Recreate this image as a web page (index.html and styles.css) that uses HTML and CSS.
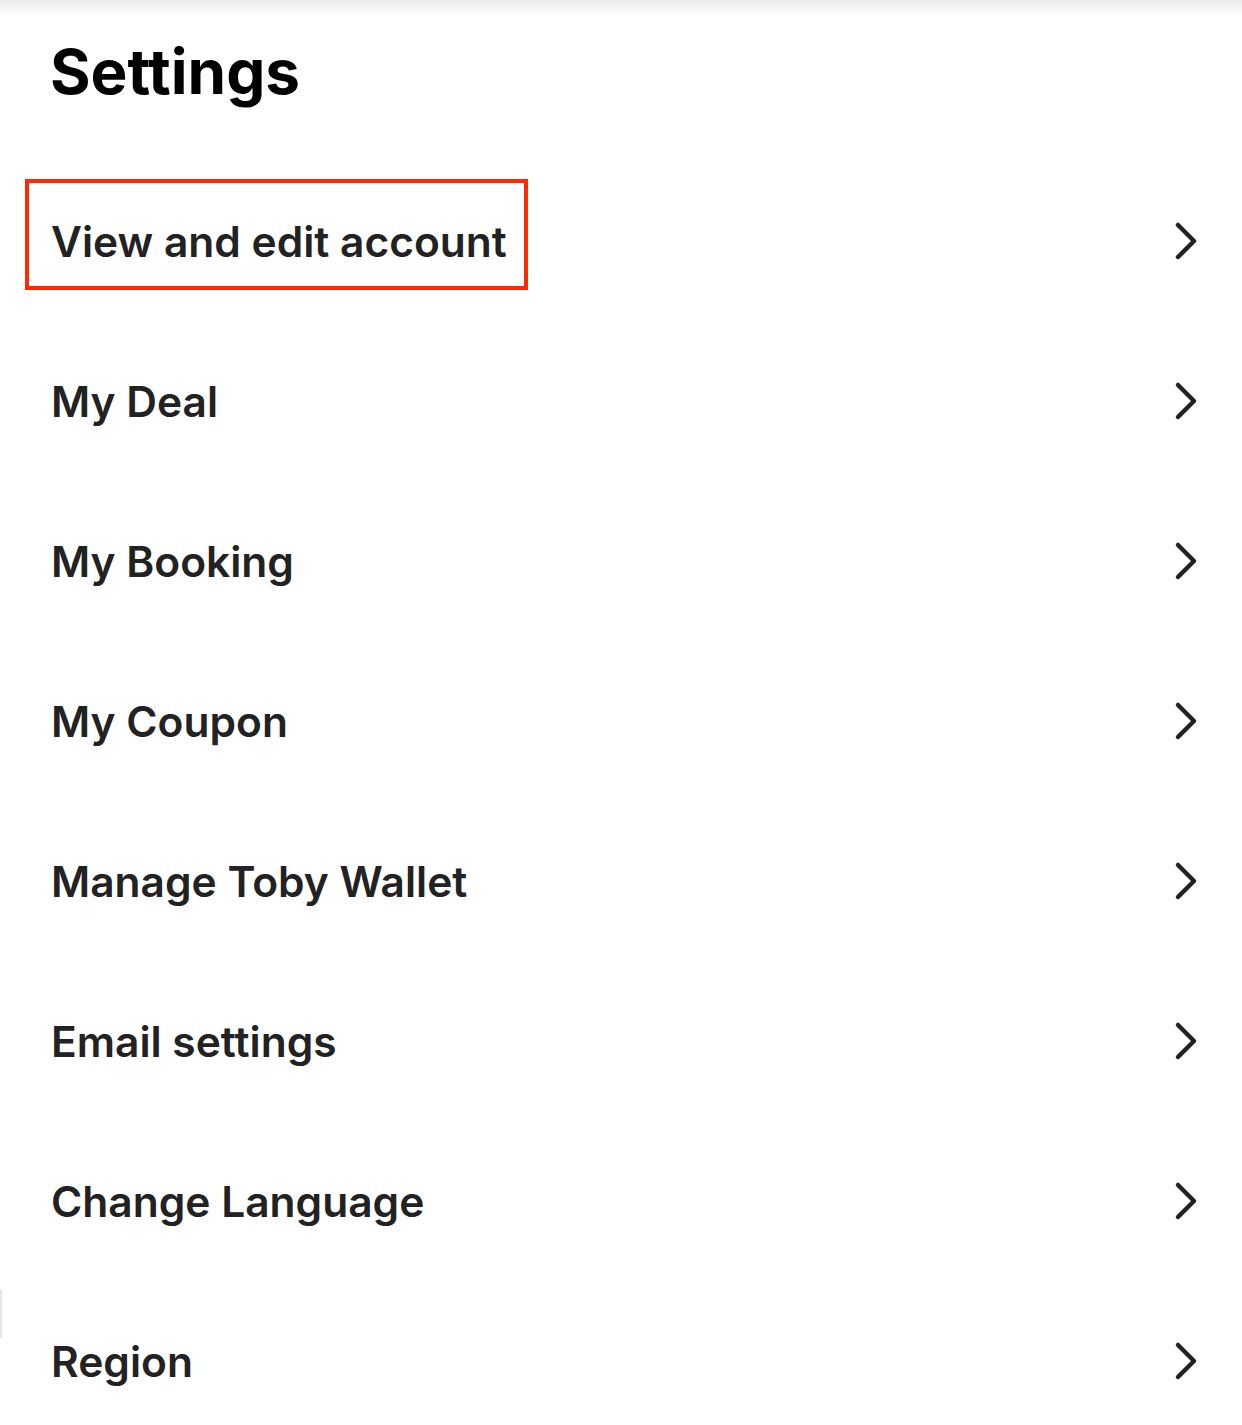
FILE: index.html
```html
<!DOCTYPE html>
<html lang="en">
<head>
    <meta charset="UTF-8">
    <meta name="viewport" content="width=device-width, initial-scale=1.0">
    <title>Settings</title>
    <link rel="stylesheet" href="styles.css">
</head>

<body>
    <div class="top-shade"></div>
    <div class="edge-mark"></div>

    <h1 class="title">Settings</h1>

    <ul class="menu">
        <li><a href="#"><span class="label highlight">View and edit account</span><svg class="chevron" viewBox="0 0 24 40"><path d="M4 4 L20 20 L4 36"/></svg></a></li>
        <li><a href="#"><span class="label">My Deal</span><svg class="chevron" viewBox="0 0 24 40"><path d="M4 4 L20 20 L4 36"/></svg></a></li>
        <li><a href="#"><span class="label">My Booking</span><svg class="chevron" viewBox="0 0 24 40"><path d="M4 4 L20 20 L4 36"/></svg></a></li>
        <li><a href="#"><span class="label">My Coupon</span><svg class="chevron" viewBox="0 0 24 40"><path d="M4 4 L20 20 L4 36"/></svg></a></li>
        <li><a href="#"><span class="label">Manage Toby Wallet</span><svg class="chevron" viewBox="0 0 24 40"><path d="M4 4 L20 20 L4 36"/></svg></a></li>
        <li><a href="#"><span class="label">Email settings</span><svg class="chevron" viewBox="0 0 24 40"><path d="M4 4 L20 20 L4 36"/></svg></a></li>
        <li><a href="#"><span class="label">Change Language</span><svg class="chevron" viewBox="0 0 24 40"><path d="M4 4 L20 20 L4 36"/></svg></a></li>
        <li><a href="#"><span class="label">Region</span><svg class="chevron" viewBox="0 0 24 40"><path d="M4 4 L20 20 L4 36"/></svg></a></li>
    </ul>
</body>
</html>
```

FILE: styles.css
```css
body {
    font-family: Inter, "Noto Sans", sans-serif;
    background-color: #fff;
    margin: 0;
    padding: 0;
    overflow: hidden;
    position: relative;
}

.top-shade {
    position: absolute;
    top: 0;
    left: 0;
    right: 0;
    height: 16px;
    background: linear-gradient(#ececec, #fff);
}

.edge-mark {
    position: absolute;
    left: 0;
    top: 1290px;
    width: 2px;
    height: 48px;
    background-color: #e6e6e6;
}

.title {
    margin: 0;
    padding: 41px 0 0 50px;
    height: 161px;
    box-sizing: border-box;
    font-size: 62px;
    font-weight: 700;
    color: #000;
    line-height: 1;
    position: relative;
}

.menu {
    list-style-type: none;
    margin: 0;
    padding: 0;
}

.menu li a {
    display: flex;
    align-items: center;
    justify-content: space-between;
    height: 160px;
    padding: 0 44px 0 51px;
    color: #222;
    text-decoration: none;
}

.label {
    font-size: 42.5px;
    font-weight: 600;
    position: relative;
}

.highlight::after {
    content: "";
    position: absolute;
    top: -37px;
    bottom: -23px;
    left: -26px;
    right: -21px;
    border: 4px solid #ff2a00;
}

.chevron {
    width: 24px;
    height: 40px;
    fill: none;
    stroke: #222;
    stroke-width: 4.5;
    stroke-linecap: round;
    stroke-linejoin: round;
}
```
